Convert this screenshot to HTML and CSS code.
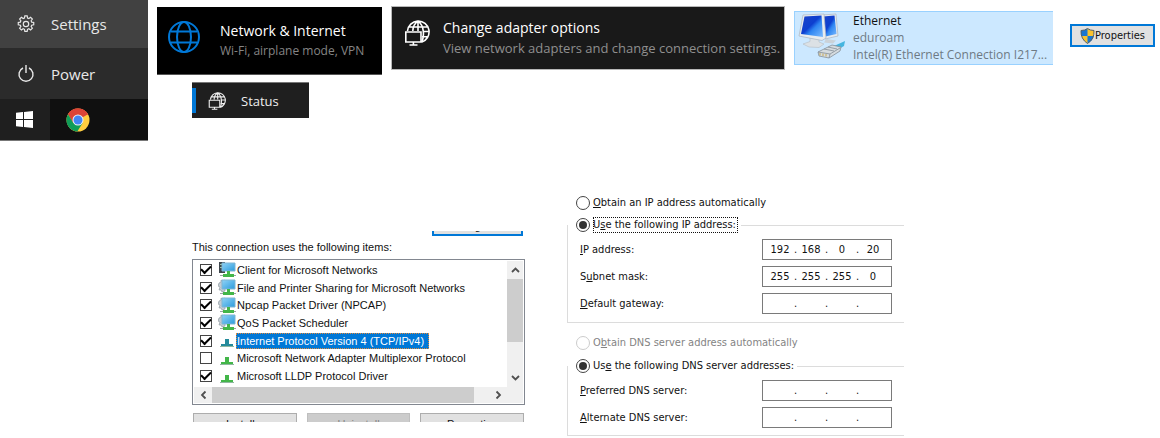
FILE: index.html
```html
<!DOCTYPE html>
<html lang="en">
<head>
<meta charset="utf-8">
<title>Ethernet IP configuration</title>
<link rel="stylesheet" href="styles.css">
</head>
<body>
<svg class="sprite" aria-hidden="true">
  <defs>
    <linearGradient id="screen" x1="0" y1="0" x2="1" y2="1">
      <stop offset="0" stop-color="#1b43c8"/><stop offset=".45" stop-color="#0d3fd0"/><stop offset=".6" stop-color="#2f86f2"/><stop offset="1" stop-color="#7dbcff"/>
    </linearGradient>
    <linearGradient id="item-screen" x1="0" y1="0" x2="1" y2="1">
      <stop offset="0" stop-color="#8fd3f7"/><stop offset="1" stop-color="#2d9bdc"/>
    </linearGradient>
  </defs>
  <symbol id="globe-pc" viewBox="0 0 26 26">
    <g fill="none" stroke="currentColor" stroke-width="1.600">
      <path d="M3.500 11A10.800 10.800 0 1 1 17.500 22.200M14 1.200C10.500 3.500 9 6.500 8.800 11M14 1.200c6.500 4.500 6.500 15.500 3.500 21M14 1.200V11M5 7h18.500M18.500 11.500h6.300M18 16.800h5.800"/>
      <path d="M1.800 12H17v10H1.800zM9.400 22v3M5.500 25h8"/>
    </g>
  </symbol>
  <symbol id="item-pc" viewBox="0 0 18 17">
    <path d="M1 4l2-1 0-2 2 1 2-1v11l-3 1-1-2-2 0 1-3-2-1z" fill="#c4ccd2" stroke="#87929a" stroke-width=".6"/>
    <path d="M4 1h13v9H4z" fill="url(#item-screen)" stroke="#7fb5d4"/>
    <path d="M9 10h3v3h4v3H5v-3h4z" fill="#43b649"/>
    <path d="M2 14h3v1H2zM16 14h2v1h-2z" fill="#9ba3a3"/>
  </symbol>
  <symbol id="item-client" viewBox="0 0 18 17">
    <path d="M1 1h6v11H1z" fill="#3e464c"/><path d="M2 3h2v1H2zM2 6h2v1H2z" fill="#9ec4a4"/>
    <path d="M4 2h13v8H4z" fill="url(#item-screen)" stroke="#7fb5d4"/>
    <path d="M9 10h3v3h4v3H5v-3h4z" fill="#43b649"/>
    <path d="M2 14h3v1H2zM16 14h2v1h-2z" fill="#9ba3a3"/>
  </symbol>
  <symbol id="item-protocol" viewBox="0 0 18 17">
    <path d="M7 7h4v5h4v3H3v-3h4z" fill="currentColor"/>
    <path d="M2 14h14v1H2z" fill="#8fb8a0"/>
  </symbol>
  <symbol id="chev" viewBox="0 0 9 6"><path d="M1 5l3.500-3.500L8 5" fill="none" stroke="#505050" stroke-width="1.800"/></symbol>
</svg>

<header class="steps">
  <nav class="start" aria-label="Start menu">
    <button class="start-row start-row-active" type="button">
      <svg viewBox="0 0 20 20" width="18" height="18" fill="none" stroke="currentColor" stroke-width="1.300">
        <path d="M8.700 1h2.600l.4 2.300 1.500.6 1.900-1.300 2 1.900-1.400 1.900.6 1.500 2.300.4v2.600l-2.300.4-.6 1.500 1.400 1.900-2 1.900-1.900-1.300-1.500.6-.4 2.300H8.700l-.4-2.300-1.500-.6-1.900 1.300-2-1.900 1.400-1.900-.6-1.500-2.300-.4V8.300l2.300-.4.6-1.500-1.400-1.900 2-1.900 1.900 1.300 1.500-.6z"/><circle cx="10" cy="10" r="3"/>
      </svg>
      <span>Settings</span>
    </button>
    <button class="start-row" type="button">
      <svg viewBox="0 0 18 18" width="18" height="18" fill="none" stroke="currentColor" stroke-width="1.400">
        <path d="M6 3a7 7 0 1 0 6 0M9 0v8"/>
      </svg>
      <span>Power</span>
    </button>
    <div class="taskbar">
      <button class="task task-start" type="button" aria-label="Start">
        <svg viewBox="0 0 17 17" width="17" height="17" fill="#fff"><path d="M0 1.800l7-.7V8H0zM8 1L17 0v8H8zM0 9h7v6.900l-7-.7zM8 9h9v8l-9-1z"/></svg>
      </button>
      <button class="task" type="button" aria-label="Chrome">
        <svg viewBox="0 0 24 24" width="24" height="24">
          <circle cx="12" cy="12" r="11.500" fill="#ffcd40"/>
          <path d="M12 12L2 6.300A11.500 11.500 0 0 1 22 6.300z" fill="#db4437"/>
          <path d="M12 6.500h10.100a11.500 11.500 0 0 0-20.100-.2L7 15z" fill="#db4437"/>
          <path d="M2 6.200A11.500 11.500 0 0 0 11.300 23.500L16.800 14.800 7.200 14.800z" fill="#0f9d58"/>
          <circle cx="12" cy="12" r="5.500" fill="#f1f1f1"/><circle cx="12" cy="12" r="4.500" fill="#4285f4"/>
        </svg>
      </button>
    </div>
  </nav>

  <div class="tiles">
    <div class="tile-row">
      <button class="tile tile-network" type="button">
        <svg viewBox="0 0 32 32" width="32" height="32" fill="none" stroke="#0078d7" stroke-width="2">
          <circle cx="16" cy="16" r="15"/><ellipse cx="16" cy="16" rx="7" ry="15"/><path d="M3 10.500h26M3 21.500h26"/>
        </svg>
        <span class="tile-text"><span>Network &amp; Internet</span><small>Wi-Fi, airplane mode, VPN</small></span>
      </button>
      <button class="tile tile-adapter" type="button">
        <svg width="26" height="26"><use href="#globe-pc"/></svg>
        <span class="tile-text"><span>Change adapter options</span><small>View network adapters and change connection settings.</small></span>
      </button>
      <button class="connection" type="button">
        <svg viewBox="0 0 48 48" width="48" height="48">
          <path d="M24 3l14-1 2 22-13 3z" fill="#e5eaef" stroke="#a9b5c1" stroke-width=".7"/>
          <path d="M25 4.500l11.500-1 2 18.500-11 2.500z" fill="url(#screen)"/>
          <path d="M28 27l10 1.500-3 3-9-1z" fill="#cbd2d8"/>
          <path d="M12 26l9 1 0 3 5 2-5 3.500-10-.5-6-3 7-2.500z" fill="#dce1e5" stroke="#b5bcc2" stroke-width=".6"/>
          <path d="M5 3l21-1 2 24-4 2.500L1 24z" fill="#e8ecef" stroke="#a9b5c1" stroke-width=".7"/>
          <path d="M6.500 4.500l17-1 1.500 21.500L3 22z" fill="url(#screen)"/>
          <path d="M36 34l11-5-1 5-7 4z" fill="#45b5df"/>
          <path d="M20 40l14-7 9 2-1 4-11 7-10-2z" fill="#d5dbdf" stroke="#858f98" stroke-width=".8"/>
          <path d="M20 40l12 2 10-6M32 42l-1 4M26 37l10 2M30 35l9 2" fill="none" stroke="#858f98" stroke-width=".8"/>
          <path d="M22 41v2.500M25 41.500V44M28 42v2.500" stroke="#c5a957"/>
        </svg>
        <span class="connection-text"><strong>Ethernet</strong><span>eduroam</span><span>Intel(R) Ethernet Connection I217...</span></span>
      </button>
      <button class="properties" type="button">
        <svg viewBox="0 0 15 16" width="15" height="16">
          <path d="M7.500.5Q10 2.500 14 2.500 14.500 11 7.500 15.500.5 11 1 2.500 5 2.500 7.500.5z" fill="#f9c22e"/>
          <path d="M7.500.5V8H1.200Q.8 5 1 2.500 5 2.500 7.500.5zM7.500 8h6.300Q13 12.500 7.500 15.500z" fill="#1976d2"/>
          <path d="M7.500.5Q10 2.500 14 2.500 14.500 11 7.500 15.500.5 11 1 2.500 5 2.500 7.500.5z" fill="none" stroke="#53606b"/>
        </svg>
        <span>Properties</span>
      </button>
    </div>
    <button class="status" type="button">
      <svg width="18" height="18"><use href="#globe-pc"/></svg>
      <span>Status</span>
    </button>
  </div>
</header>

<main class="dialogs">
  <section class="items">
    <div class="cut cut-top"><button type="button" class="btn btn-focus">Configure...</button></div>
    <h2 class="items-title" id="items-title">This connection uses the following items:</h2>
    <div class="listbox" role="group" aria-labelledby="items-title">
      <div class="list">
        <label class="item"><input type="checkbox" checked><svg width="18" height="17"><use href="#item-client"/></svg><span>Client for Microsoft Networks</span></label>
        <label class="item"><input type="checkbox" checked><svg width="18" height="17"><use href="#item-pc"/></svg><span>File and Printer Sharing for Microsoft Networks</span></label>
        <label class="item"><input type="checkbox" checked><svg width="18" height="17"><use href="#item-pc"/></svg><span>Npcap Packet Driver (NPCAP)</span></label>
        <label class="item"><input type="checkbox" checked><svg width="18" height="17"><use href="#item-pc"/></svg><span>QoS Packet Scheduler</span></label>
        <label class="item item-selected"><input type="checkbox" checked><svg width="18" height="17"><use href="#item-protocol"/></svg><span>Internet Protocol Version 4 (TCP/IPv4)</span></label>
        <label class="item"><input type="checkbox"><svg width="18" height="17"><use href="#item-protocol"/></svg><span>Microsoft Network Adapter Multiplexor Protocol</span></label>
        <label class="item"><input type="checkbox" checked><svg width="18" height="17"><use href="#item-protocol"/></svg><span>Microsoft LLDP Protocol Driver</span></label>
      </div>
      <div class="vbar">
        <button type="button" aria-label="Scroll up"><svg width="9" height="6"><use href="#chev"/></svg></button>
        <div class="vthumb"></div>
        <button type="button" class="down" aria-label="Scroll down"><svg width="9" height="6"><use href="#chev"/></svg></button>
      </div>
      <div class="hbar">
        <button type="button" class="left" aria-label="Scroll left"><svg width="9" height="6"><use href="#chev"/></svg></button>
        <div class="hthumb"></div>
        <button type="button" class="right" aria-label="Scroll right"><svg width="9" height="6"><use href="#chev"/></svg></button>
      </div>
    </div>
    <div class="cut cut-bottom">
      <button type="button" class="btn">Install...</button>
      <button type="button" class="btn" disabled>Uninstall</button>
      <button type="button" class="btn">Properties</button>
    </div>
  </section>

  <form class="ip">
    <label class="radio"><input type="radio" name="ip"><span><u>O</u>btain an IP address automatically</span></label>
    <fieldset class="group group-ip">
      <legend><label class="radio"><input type="radio" name="ip" checked><span class="focus">U<u>s</u>e the following IP address:</span></label></legend>
      <div class="field"><label for="ip1"><u>I</u>P address:</label>
        <div class="octets"><input id="ip1" value="192"><i>.</i><input aria-label="IP address, part 2" value="168"><i>.</i><input aria-label="IP address, part 3" value="0"><i>.</i><input aria-label="IP address, part 4" value="20"></div></div>
      <div class="field"><label for="mask1">S<u>u</u>bnet mask:</label>
        <div class="octets"><input id="mask1" value="255"><i>.</i><input aria-label="Subnet mask, part 2" value="255"><i>.</i><input aria-label="Subnet mask, part 3" value="255"><i>.</i><input aria-label="Subnet mask, part 4" value="0"></div></div>
      <div class="field"><label for="gw1"><u>D</u>efault gateway:</label>
        <div class="octets"><input id="gw1"><i>.</i><input aria-label="Default gateway, part 2"><i>.</i><input aria-label="Default gateway, part 3"><i>.</i><input aria-label="Default gateway, part 4"></div></div>
    </fieldset>
    <label class="radio radio-dns"><input type="radio" name="dns" disabled><span>O<u>b</u>tain DNS server address automatically</span></label>
    <fieldset class="group group-dns">
      <legend><label class="radio"><input type="radio" name="dns" checked><span>Us<u>e</u> the following DNS server addresses:</span></label></legend>
      <div class="field"><label for="dns1"><u>P</u>referred DNS server:</label>
        <div class="octets"><input id="dns1"><i>.</i><input aria-label="Preferred DNS server, part 2"><i>.</i><input aria-label="Preferred DNS server, part 3"><i>.</i><input aria-label="Preferred DNS server, part 4"></div></div>
      <div class="field"><label for="alt1"><u>A</u>lternate DNS server:</label>
        <div class="octets"><input id="alt1"><i>.</i><input aria-label="Alternate DNS server, part 2"><i>.</i><input aria-label="Alternate DNS server, part 3"><i>.</i><input aria-label="Alternate DNS server, part 4"></div></div>
    </fieldset>
  </form>
</main>
</body>
</html>
```

FILE: styles.css
```css
* { box-sizing: border-box; }
body { margin: 0; background: #fff; color: #111; font-family: "Open Sans", "Noto Sans", sans-serif; }
button { border: 0; margin: 0; padding: 0; font: inherit; color: inherit; background: none; text-align: left; white-space: nowrap; }
svg { display: block; flex: none; }
.sprite { position: absolute; width: 0; height: 0; }

.steps { display: flex; align-items: flex-start; gap: 9px; }
.start { flex: none; width: 148px; background: #2b2b2b; color: #e8e8e8; border-bottom: 1px solid #777; font-size: 15px; line-height: 20px; }
.start-row { display: flex; align-items: center; gap: 16px; width: 100%; height: 51px; padding-left: 17px; }
.start-row-active { height: 48px; background: #414141; }
.taskbar { display: flex; height: 41px; background: #101010; }
.task { display: flex; align-items: center; padding-left: 16px; }
.task-start { width: 50px; background: #1f1f1f; }

.tiles { flex: 1; padding-top: 6px; }
.tile-row { display: flex; align-items: flex-start; gap: 9px; }
.tile { display: flex; align-items: flex-start; color: #fff; font-size: 14px; line-height: 20px; }
.tile-text { display: flex; flex-direction: column; }
.tile small { font-size: 12px; color: #858585; }
.tile-network { width: 225px; height: 68px; margin-top: 1px; padding: 14px 0 0 11px; gap: 20px; background: #000; border-bottom: 1px solid #555; }
.tile-adapter { width: 394px; height: 64px; padding: 11px 0 0 12px; gap: 13px; background: #191919; border: 1px solid #b8b8b8; }
.tile-adapter svg { margin-top: 2px; }
.tile-adapter small { font-size: 13px; color: #8f8f8f; }
.status { display: flex; align-items: center; width: 117px; height: 36px; margin: 7px 0 0 35px; background: #1f1f1f; border-top: 1px solid #777; color: #eee; font-size: 13px; }
.status::before { content: ""; width: 4px; height: 25px; background: #0078d7; }
.status svg { margin: 0 15px 0 12px; }

.connection { display: flex; gap: 7px; width: 259px; height: 54px; margin-top: 5px; padding: 0 0 0 3px; background: #cce8ff; border: 1px solid #99d1ff; border-right: 0; font-size: 12px; line-height: 17px; color: #6e7a84; }
.connection-text { display: flex; flex-direction: column; }
.connection strong { font-weight: 500; color: #111; }
.properties { display: flex; align-items: center; justify-content: center; width: 85px; height: 23px; margin: 18px 0 0 8px; border: 2px solid #0078d7; background: #e1e1e1; font-family: "DejaVu Sans Condensed", "DejaVu Sans", sans-serif; font-size: 11px; }

.dialogs { display: flex; align-items: flex-start; gap: 42px; padding: 54px 0 0 192px; }
.items { width: 333px; margin-top: 36px; font: 11px/16px "Liberation Sans", sans-serif; }
.cut { display: flex; overflow: hidden; }
.cut-top { height: 5px; align-items: flex-end; justify-content: flex-end; padding-right: 2px; }
.cut-bottom { height: 9px; gap: 10px; margin-top: 8px; padding: 0 1px; }
.btn { flex: 1; height: 21px; border: 1px solid #adadad; background: #e1e1e1; text-align: center; }
.btn:disabled { background: #ccc; border-color: #bfbfbf; color: #838383; }
.btn-focus { flex: none; width: 91px; border: 2px solid #0078d7; }
.items-title { margin: 3px 0 4px; font: inherit; }
.listbox { display: grid; grid-template-columns: 1fr 16px; border: 1px solid #828790; padding: 1px; }
.list { display: grid; grid-auto-rows: 1fr; height: 126px; padding-bottom: 2px; }
.item { display: flex; align-items: center; min-height: 0; padding-left: 6px; white-space: nowrap; }
.item svg { margin-left: 6px; color: #43b649; }
.item span { padding: 0 5px 0 1px; }
.item input { appearance: none; flex: none; width: 12px; height: 12px; margin: 0; border: 1px solid #444; background: #fff; display: grid; place-items: center; }
.item input:checked::before { content: ""; width: 8px; height: 4px; border: solid #000; border-width: 0 0 2px 2px; transform: rotate(-45deg) translate(1px, -1px); }
.item-selected span { background: #0078d7; color: #fff; outline: 1px dotted #e08a3c; outline-offset: -1px; }
.item-selected svg { color: #258b9b; }
.vbar { display: flex; flex-direction: column; background: #f0f0f0; }
.vbar button { display: grid; place-items: center; height: 18px; }
.vthumb { height: 63px; background: #cdcdcd; }
.vbar .down { margin-top: auto; }
.down svg { transform: rotate(180deg); }
.hbar { grid-column: 1 / -1; display: flex; height: 16px; background: #f0f0f0; }
.hbar button { display: grid; place-items: center; width: 18px; }
.hthumb { width: 262px; background: #cdcdcd; }
.hbar .right { margin-left: 15px; }
.left svg { transform: rotate(-90deg); }
.right svg { transform: rotate(90deg); }

.ip { width: 337px; font: 11px/16px "DejaVu Sans Condensed", "DejaVu Sans", sans-serif; }
.radio { display: flex; align-items: center; gap: 3px; padding-left: 9px; white-space: nowrap; }
.radio input { appearance: none; width: 14px; height: 14px; margin: 0; border: 1px solid #444; border-radius: 50%; background: #fff; display: grid; place-items: center; }
.radio input:checked::before { content: ""; width: 8px; height: 8px; border-radius: 50%; background: #333; }
.radio input:disabled { border-color: #ccc; }
.radio input:disabled + span { color: #838383; }
.radio-dns { margin-top: 12px; }
.focus { outline: 1px dotted #111; outline-offset: -1px; padding-right: 2px; }
.group { margin: 6px 0 0; min-width: 0; padding: 6px 12px 7px; border: 1px solid #dcdcdc; border-right: 0; }
.group-ip { padding-bottom: 8px; }
.group-dns { margin-top: 7px; }
.group legend { margin-left: -12px; padding: 0 3px 0 0; background: #fff; }
.group legend .radio { padding-left: 8px; }
.field { display: flex; align-items: center; justify-content: space-between; }
.field + .field { margin-top: 6px; }
.octets { display: flex; width: 130px; height: 21px; padding-left: 4px; border: 1px solid #7a7a7a; background: #fff; }
.octets input { width: 26px; min-width: 0; border: 0; padding: 0; background: none; font: inherit; color: inherit; text-align: center; outline: 0; }
.octets i { width: 5px; font-style: normal; text-align: center; line-height: 19px; }
```
